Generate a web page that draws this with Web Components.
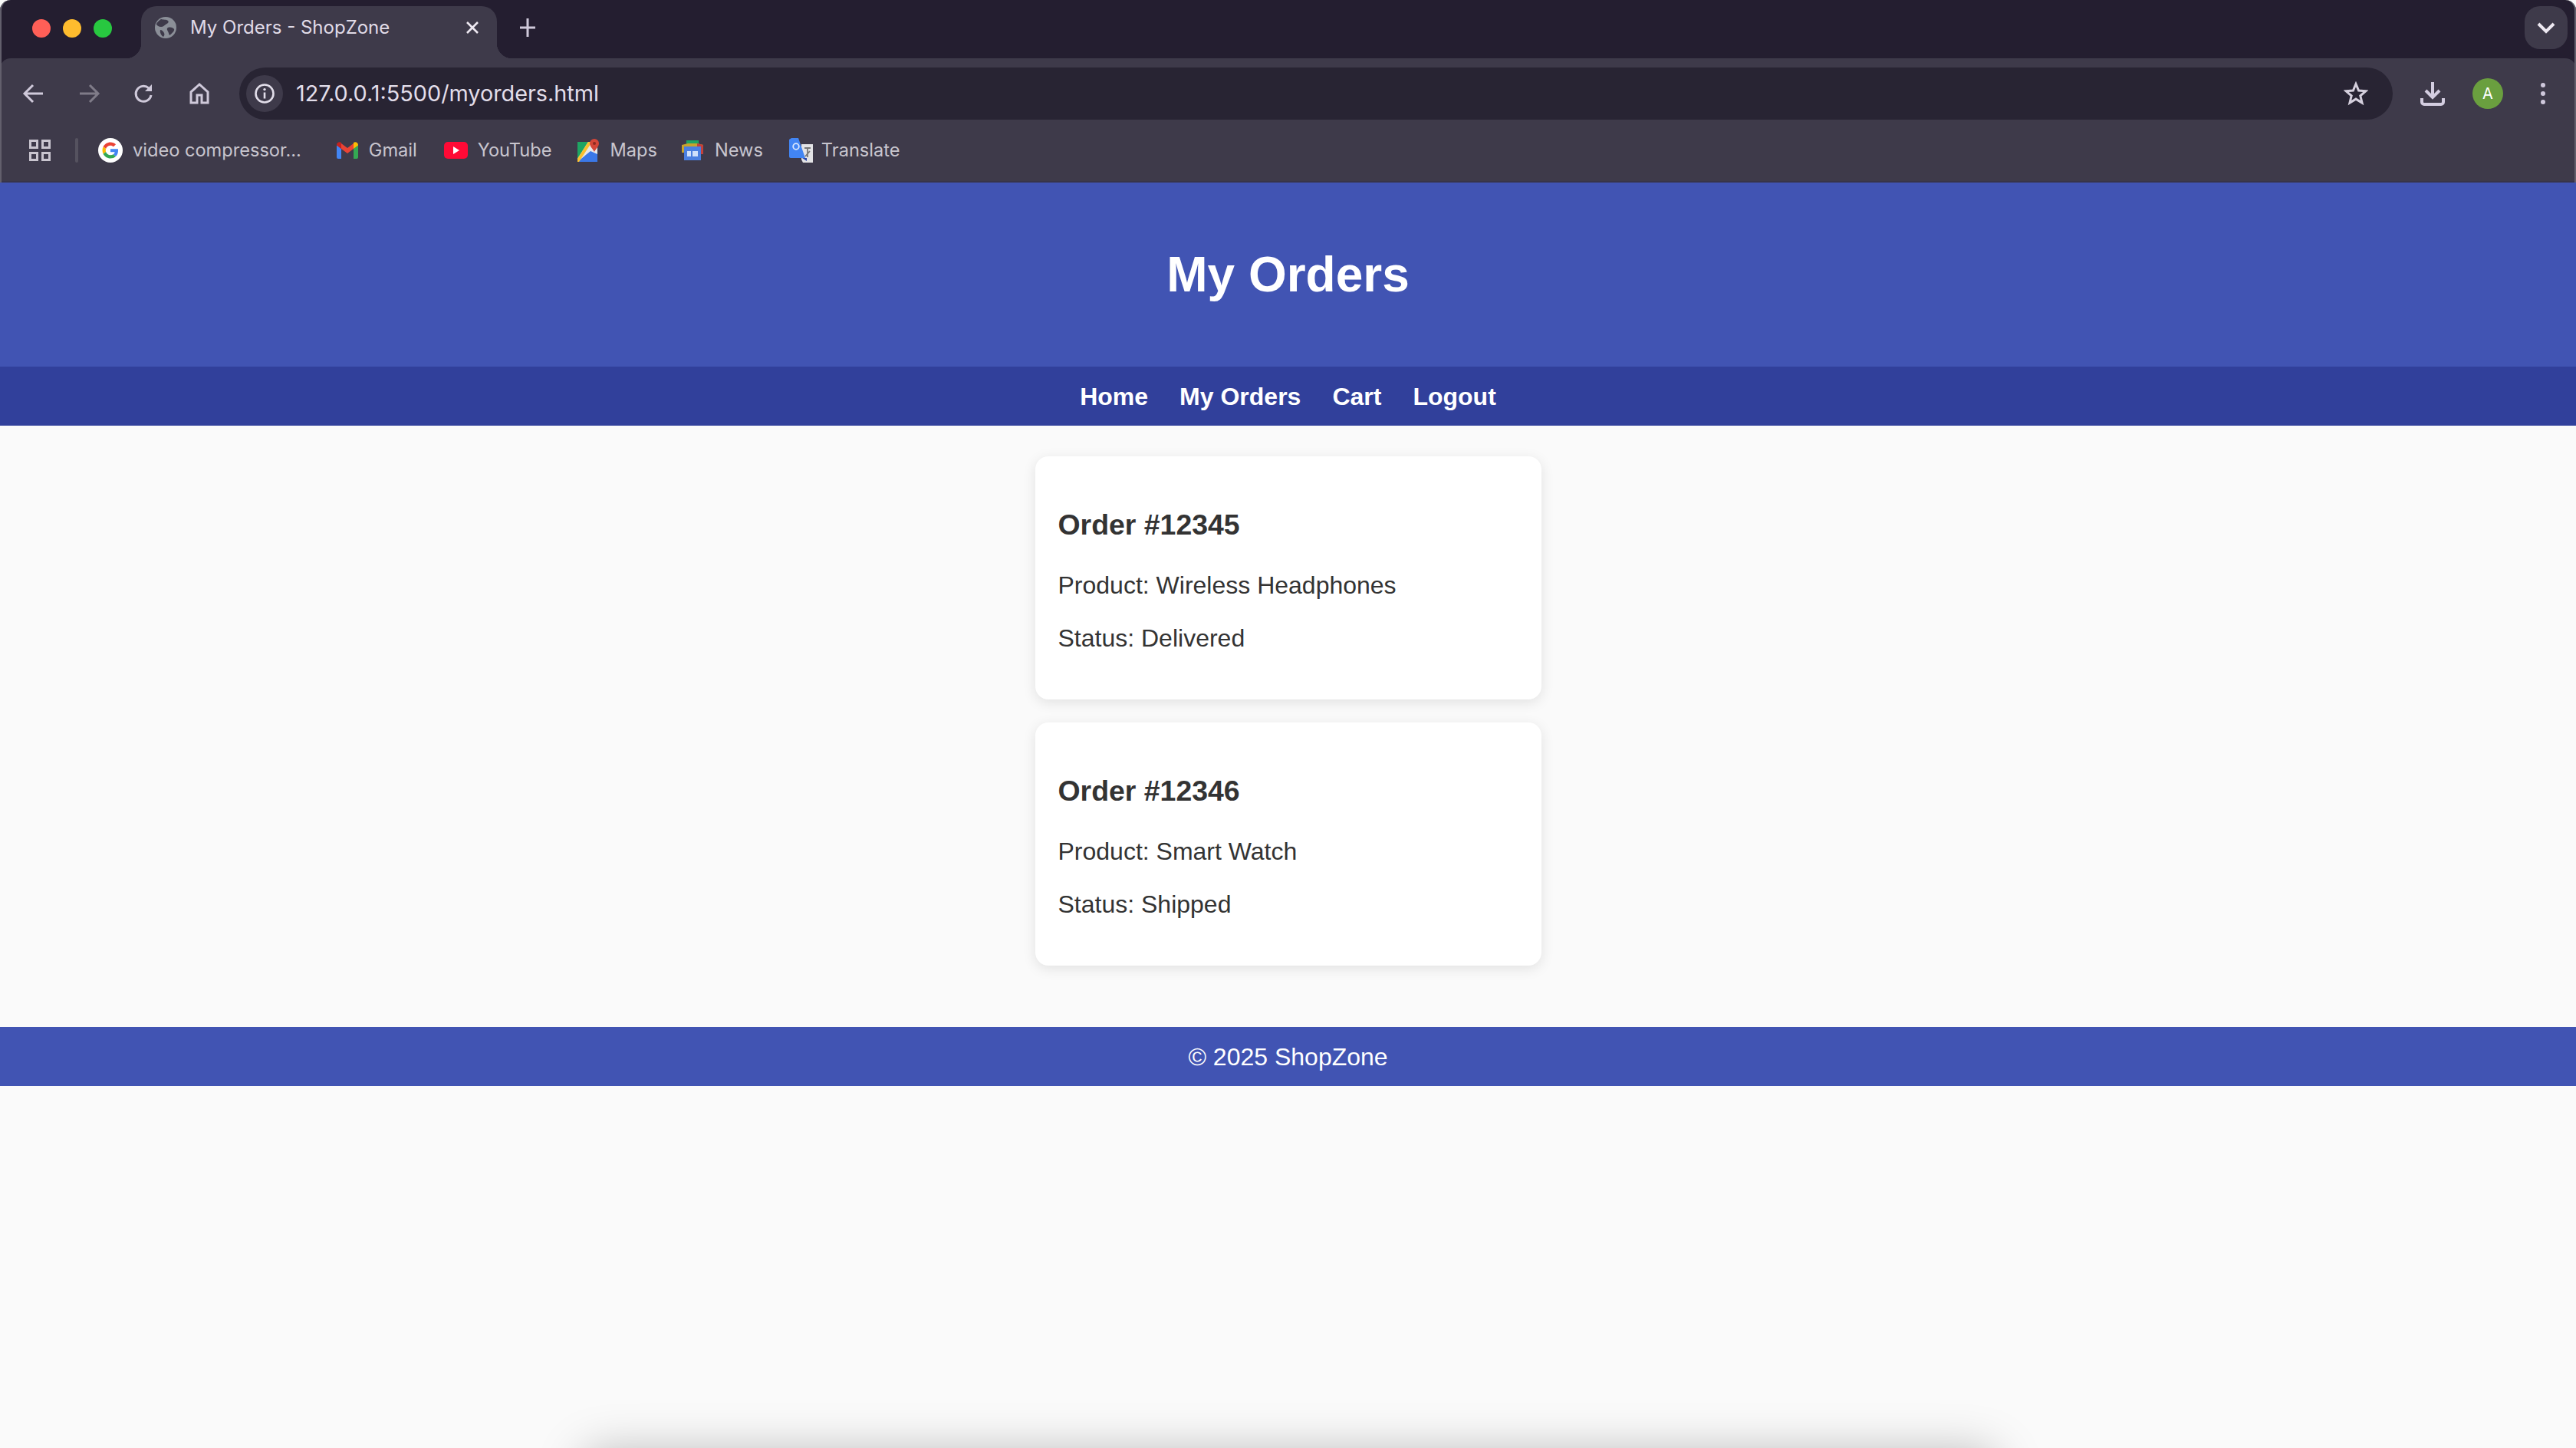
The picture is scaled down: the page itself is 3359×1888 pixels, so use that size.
<!DOCTYPE html>
<html lang="en"><head><meta charset="utf-8"><title>My Orders - ShopZone</title>
<style>
html,body{margin:0;padding:0;background:#fafafa;height:1888px;overflow:hidden}
body{position:relative;font-family:"Liberation Sans",Arial,sans-serif}
</style></head><body>
<browser-chrome>
  <tab-strip title-text="My Orders - ShopZone"></tab-strip>
  <tool-bar url="127.0.0.1:5500/myorders.html"></tool-bar>
  <bookmark-bar>
    <book-mark label="video compressor..." icon="google" ml="0" gap="13"></book-mark>
    <book-mark label="Gmail" icon="gmail" ml="46" gap="14"></book-mark>
    <book-mark label="YouTube" icon="youtube" ml="35" gap="13"></book-mark>
    <book-mark label="Maps" icon="maps" ml="33" gap="13"></book-mark>
    <book-mark label="News" icon="news" ml="32" gap="15"></book-mark>
    <book-mark label="Translate" icon="translate" ml="34" gap="10"></book-mark>
  </bookmark-bar>
</browser-chrome>
<site-header>My Orders</site-header>
<site-nav><a>Home</a><a>My Orders</a><a>Cart</a><a>Logout</a></site-nav>
<order-list>
  <order-card number="Order #12345" product="Product: Wireless Headphones" status="Status: Delivered"></order-card>
  <order-card number="Order #12346" product="Product: Smart Watch" status="Status: Shipped"></order-card>
</order-list>
<site-footer>© 2025 ShopZone</site-footer>
<dock-shadow></dock-shadow>
<script>
const def=(name,css,html)=>customElements.define(name,class extends HTMLElement{
  constructor(){super();const r=this.attachShadow({mode:'open'});
    const h=typeof html==='function'?'':html;
    r.innerHTML='<style>'+css+'</style>'+h;}
  connectedCallback(){if(typeof html==='function'){const r=this.shadowRoot;const st=r.querySelector('style').outerHTML;r.innerHTML=st+html(this);}}
});
const UI='"Inter","Liberation Sans",sans-serif';
def('browser-chrome',`:host{display:block;height:238px;background:#241e30;position:relative;border-radius:14px 14px 0 0;font-family:${UI}}
 :host::after{content:"";position:absolute;left:0;right:0;top:0;bottom:0;border:solid #625f6c;border-width:0 2px;pointer-events:none;border-radius:14px 14px 0 0}`,`<slot></slot>`);
def('tab-strip',`:host{display:flex;align-items:flex-start;height:76px;box-sizing:border-box;padding:8px 11px 0 42px;color:#e4dfea}
 .lights{display:flex;gap:16px;margin-top:17px;width:142px;flex:none}
 .lights i{width:24px;height:24px;border-radius:50%;display:block}
 .tab{width:464px;height:68px;background:#3e3a4a;border-radius:20px 20px 0 0;position:relative;display:flex;align-items:flex-start;box-sizing:border-box;padding:14px 0 0 18px;flex:none}
 .tab::before,.tab::after{content:"";position:absolute;bottom:0;width:20px;height:20px;background:radial-gradient(circle at 0 0,transparent 20px,#3e3a4a 20.5px)}
 .tab::before{left:-20px}.tab::after{right:-20px;background:radial-gradient(circle at 100% 0,transparent 20px,#3e3a4a 20.5px)}
 .tt{font-size:24px;line-height:28px;margin-left:18px;white-space:nowrap;color:#e0dbe7;width:359px;flex:none}
 svg{flex:none;display:block}
 .plus{margin:14px 0 0 28px}
 .sp{flex:1}
 .ch{width:56px;height:56px;border-radius:20px;background:#3e3a4a;display:flex;align-items:center;justify-content:center}`,
 e=>`<div class="lights"><i style="background:#ff5f57"></i><i style="background:#febc2e"></i><i style="background:#28c840"></i></div>
 <div class="tab"><svg width="28" height="28" viewBox="0 0 28 28"><circle cx="14" cy="14" r="14" fill="#8b8f98"/><path d="M8 3c3 1 7 0 9 2s-1 4-3 5-3 3-6 3-5-2-6-3 3-5 6-7zM17 14c3-1 7 0 8 2s-3 6-6 8c-1-2-1-3-2-5s-2-4 0-5zM7 17c2 0 4 2 5 4s0 4-1 5c-2-1-5-5-4-9z" fill="#3e3a4a"/></svg>
 <div class="tt">${e.getAttribute('title-text')||''}</div>
 <svg style="margin-top:5px" width="18" height="18" viewBox="0 0 18 18"><path d="M2 2l14 14M16 2L2 16" stroke="#eee9f2" stroke-width="2.6"/></svg></div>
 <svg class="plus" width="24" height="28" viewBox="0 0 24 28"><path d="M12 2v24M2 14h20" stroke="#cfc9da" stroke-width="3"/></svg>
 <div class="sp"></div>
 <div class="ch"><svg width="26" height="18" viewBox="0 0 26 18"><path d="M3 4l10 10L23 4" fill="none" stroke="#eee9f2" stroke-width="4"/></svg></div>`);
def('tool-bar',`:host{display:flex;align-items:center;height:80px;background:#3e3a4a;border-radius:14px 14px 0 0;box-sizing:border-box;padding:12px 0 0 0;color:#d9d4e1}
 .ic{flex:none;display:block}
 .nav{display:flex;align-items:center;padding-left:28px;gap:40px;flex:none;width:312px;box-sizing:border-box}
 .omni{flex:none;width:2808px;height:68px;border-radius:34px;background:#282433;display:flex;align-items:center;box-sizing:border-box;padding:0 32px 0 9px}
 .info{width:48px;height:48px;border-radius:50%;background:#3e3a4a;display:flex;align-items:center;justify-content:center;flex:none}
 .url{font-size:28.8px;line-height:34px;margin-left:17px;flex:1;white-space:nowrap;color:#e2deea}
 .right{display:flex;align-items:center;flex:none}
 .av{width:40px;height:40px;border-radius:50%;background:#6a9f3f;color:#fff;font-size:20px;line-height:40px;text-align:center;flex:none}
 .dots{display:flex;flex-direction:column;gap:5px}.dots i{display:block;width:6px;height:6px;border-radius:50%;background:#cfc8dc}`,
 e=>`<div class="nav">
 <svg class="ic" width="32" height="32" viewBox="0 0 32 32"><path d="M28 16H5M15 5L4 16l11 11" fill="none" stroke="#cfc9da" stroke-width="3"/></svg>
 <svg class="ic" width="32" height="32" viewBox="0 0 32 32"><path d="M4 16h23M17 5l11 11-11 11" fill="none" stroke="#7f7b88" stroke-width="3"/></svg>
 <svg class="ic" width="32" height="32" viewBox="0 0 32 32"><path d="M25 18a10 10 0 1 1-3-9l3 3" fill="none" stroke="#cfc9da" stroke-width="3"/><path d="M26 4v9h-9z" fill="#cfc9da"/></svg>
 <svg class="ic" width="32" height="32" viewBox="0 0 32 32"><path d="M16 4L5 14v14h8v-10h6v10h8V14z" fill="none" stroke="#cfc9da" stroke-width="3"/></svg></div>
 <div class="omni"><div class="info"><svg class="ic" width="28" height="28" viewBox="0 0 28 28"><circle cx="14" cy="14" r="11.5" fill="none" stroke="#e2deea" stroke-width="2.6"/><path d="M14 12.5v8" stroke="#e2deea" stroke-width="2.6"/><circle cx="14" cy="8.6" r="1.7" fill="#e2deea"/></svg></div>
 <div class="url">${e.getAttribute('url')||''}</div>
 <svg class="ic" width="32" height="32" viewBox="0 0 32 32"><path d="M16 3.5l3.6 8.6 9.3.7-7.1 6.1 2.2 9.1-8-4.9-8 4.9 2.2-9.1-7.1-6.1 9.3-.7z" fill="none" stroke="#d5d0dd" stroke-width="3"/></svg></div>
 <div class="right">
 <svg class="ic" style="margin-left:36px" width="32" height="32" viewBox="0 0 32 32"><path d="M16 1v19M7 12l9 9 9-9" fill="none" stroke="#d3cde0" stroke-width="4"/><path d="M2 22v5a3 3 0 0 0 3 3h22a3 3 0 0 0 3-3v-5" fill="none" stroke="#d3cde0" stroke-width="4"/></svg>
 <div class="av" style="margin-left:36px">A</div>
 <div class="dots" style="margin-left:49px"><i></i><i></i><i></i></div></div>`);
def('bookmark-bar',`:host{display:flex;align-items:center;height:82px;background:#3e3a4a;box-sizing:border-box;padding:0 0 0 38px;border-bottom:2px solid #37344a;font-family:${UI}}
 .apps{flex:none;display:block}.d{width:4px;height:32px;background:#55525f;border-radius:2px;margin:0 26px 0 32px;flex:none}`,
 `<svg class="apps" width="28" height="28" viewBox="0 0 28 28"><g fill="none" stroke="#c9c5cf" stroke-width="3"><rect x="1.5" y="1.5" width="9" height="9"/><rect x="17.5" y="1.5" width="9" height="9"/><rect x="1.5" y="17.5" width="9" height="9"/><rect x="17.5" y="17.5" width="9" height="9"/></g></svg><div class="d"></div><slot></slot>`);
const icons={
 google:`<svg width="32" height="32" viewBox="0 0 32 32" style="display:block"><circle cx="16" cy="16" r="16" fill="#fff"/><g transform="translate(5.5 5.5) scale(.4375)"><path fill="#EA4335" d="M24 9.5c3.5 0 6.7 1.2 9.2 3.6l6.9-6.9C35.9 2.4 30.5 0 24 0 14.6 0 6.5 5.4 2.6 13.2l8 6.2C12.4 13.7 17.7 9.5 24 9.5z"/><path fill="#4285F4" d="M47 24.5c0-1.6-.1-3.1-.4-4.5H24v9h12.9c-.6 3-2.2 5.500-4.700 7.200l7.700 6c4.500-4.200 7.100-10.300 7.100-17.700z"/><path fill="#FBBC05" d="M10.500 28.600c-.5-1.400-.7-3-.7-4.600s.3-3.200.7-4.600l-8-6.200C.9 16.500 0 20.100 0 24s.9 7.500 2.600 10.800l7.900-6.200z"/><path fill="#34A853" d="M24 48c6.500 0 11.900-2.100 15.900-5.800l-7.700-6c-2.100 1.400-4.900 2.300-8.200 2.300-6.300 0-11.600-4.200-13.500-9.900l-8 6.200C6.500 42.600 14.600 48 24 48z"/></g></svg>`,
 gmail:`<svg width="28" height="22" viewBox="0 0 28 22" style="display:block"><path d="M0 4v16a2 2 0 0 0 2 2h4V9z" fill="#4285f4"/><path d="M28 4v16a2 2 0 0 1-2 2h-4V9z" fill="#34a853"/><path d="M6 9l8 6 8-6V2l-8 6-8-6z" fill="#ea4335"/><path d="M0 4c0-3 3.500-5 6-3v8L0 4.600z" fill="#c5221f"/><path d="M28 4c0-3-3.500-5-6-3v8l6-4.400z" fill="#fbbc04"/></svg>`,
 youtube:`<svg width="31" height="22" viewBox="0 0 31 22" style="display:block"><rect width="31" height="22" rx="5" fill="#ff0a36"/><path d="M12 6l8 5-8 5z" fill="#fff"/></svg>`,
 maps:`<svg width="30" height="30" viewBox="0 0 30 30" style="display:block"><rect x="0" y="4" width="26" height="26" fill="#e8e8e8"/><path d="M0 4h14L0 26z" fill="#1fa463"/><path d="M0 30h26V20l-9-4z" fill="#3b78e7"/><path d="M0 26L14 4h5L2 30H0z" fill="#fbc02d"/><path d="M22 0a6 6 0 0 1 6 6c0 4-4 7-6 11-2-4-6-7-6-11a6 6 0 0 1 6-6z" fill="#d44638"/><circle cx="22" cy="6" r="2" fill="#8c2a20"/></svg>`,
 news:`<svg width="28" height="26" viewBox="0 0 28 26" style="display:block"><rect x="6" y="0" width="16" height="8" fill="#1fa463"/><path d="M0 6l8-2h12l8 2v10H0z" fill="#c9a32b"/><path d="M20 4l8 2v12h-8z" fill="#c3403a"/><rect x="3" y="8" width="22" height="18" fill="#4a7fe0"/><rect x="7" y="14" width="5" height="7" fill="#cfe0fb"/><rect x="14" y="14" width="7" height="7" fill="#cfe0fb"/></svg>`,
 translate:`<svg width="32" height="32" viewBox="0 0 32 32" style="display:block"><path d="M16 8h15v24H18l-2-4z" fill="#e3e3e6"/><path d="M20 13h8M24 13v12M21 24l6-7" stroke="#777" stroke-width="1.800" fill="none"/><path d="M0 2l3-2h9l9 26H2a2 2 0 0 1-2-2z" fill="#4285f4"/><circle cx="9" cy="11" r="3.800" fill="none" stroke="#dce8fd" stroke-width="1.800"/><path d="M17 26h6v4z" fill="#2a47a8"/></svg>`
};
def('book-mark',`:host{display:flex;align-items:center;flex:none;color:#c8c5ce;font-size:23.6px;line-height:30px;white-space:nowrap}`,
 e=>`<span style="display:block;margin-left:${e.getAttribute('ml')||0}px;margin-right:${e.getAttribute('gap')||0}px">${icons[e.getAttribute('icon')]||''}</span><span>${e.getAttribute('label')||''}</span>`);
def('site-header',`:host{display:flex;align-items:center;justify-content:center;height:240px;background:#4154b3;color:#fff;font-weight:700;font-size:64px;line-height:80px}`,`<slot></slot>`);
def('site-nav',`:host{display:flex;align-items:center;justify-content:center;height:77px;box-sizing:border-box;padding-top:1px;background:#31409b;gap:41px;color:#fff;font-weight:700;font-size:32px}`,`<slot></slot>`);
def('order-list',`:host{display:flex;flex-direction:column;align-items:center;gap:30px;padding:40px 0 80px}`,`<slot></slot>`);
def('order-card',`:host{display:block;width:660px;height:317px;box-sizing:border-box;background:#fff;border-radius:17px;padding:66px 30px 0;box-shadow:0 4px 17px rgba(0,0,0,.1);color:#333}
 h3{margin:0 0 37px;font-size:37.44px;line-height:46px;font-weight:700}
 p{margin:0 0 29.5px;font-size:32px;line-height:39px}`,
 e=>`<h3>${e.getAttribute('number')}</h3><p>${e.getAttribute('product')}</p><p>${e.getAttribute('status')}</p>`);
def('site-footer',`:host{display:flex;align-items:center;justify-content:center;height:77px;box-sizing:border-box;padding-top:1px;background:#4154b3;color:#fff;font-size:32px}`,`<slot></slot>`);
def('dock-shadow',`:host{position:absolute;left:0;right:0;bottom:0;height:80px;overflow:hidden;display:block;pointer-events:none}
 div{position:absolute;left:760px;right:755px;top:84px;height:120px;border-radius:24px;box-shadow:0 0 60px 0 rgba(0,0,0,.26)}`,`<div></div>`);
</script>
</body></html>
